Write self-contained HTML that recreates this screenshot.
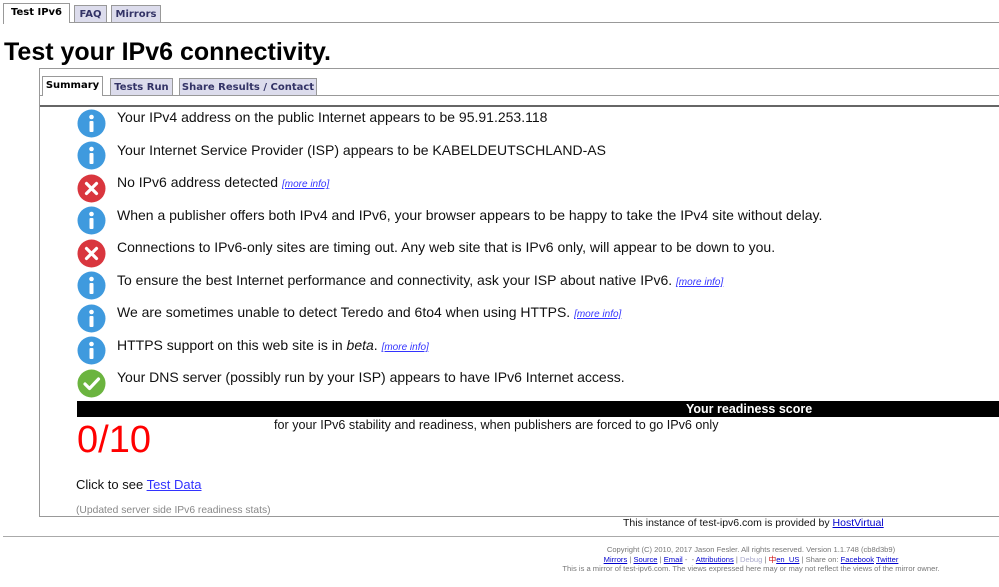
<!DOCTYPE html>
<html><head><meta charset="utf-8"><style>
body{margin:0;width:999px;height:587px;background:#fff;font-family:"Liberation Sans",Arial,sans-serif;position:relative;overflow:hidden;color:#000}
.a{position:absolute;white-space:nowrap}
.tab{position:absolute;font-family:"DejaVu Sans",sans-serif;font-weight:bold;font-size:10px;color:#333366;background:#dcdcec;border:1px solid #999;border-bottom:none;height:17px;line-height:17px;text-align:center;box-sizing:border-box}
.tab.on{background:#fff;color:#000;height:20px}
.hl{position:absolute;height:1px;background:#999}
.t{position:absolute;left:117px;font-size:14px;white-space:nowrap;color:#111}
.m{font-size:10px;font-style:italic;color:#33f;text-decoration:underline}
.ic{position:absolute;left:77px;width:29px;height:29px}
.ft a{color:#00c;text-decoration:underline}
</style></head><body>
<div class="tab on" style="left:3px;top:3px;width:67px">Test IPv6</div>
<div class="tab" style="left:74px;top:5px;width:33px">FAQ</div>
<div class="tab" style="left:111px;top:5px;width:50px">Mirrors</div>
<div class="hl" style="left:70px;top:22px;width:929px"></div>
<div class="hl" style="left:3px;top:22px;width:1px;height:2px"></div>

<div class="a" style="left:4px;top:38px;font-size:25px;font-weight:bold">Test your IPv6 connectivity.</div>

<div style="position:absolute;left:39px;top:68px;width:970px;height:449px;border:1px solid #999;box-sizing:border-box"></div>
<div class="tab on" style="left:42px;top:76px;width:61px">Summary</div>
<div class="tab" style="left:110px;top:78px;width:63px">Tests Run</div>
<div class="tab" style="left:179px;top:78px;width:138px">Share Results / Contact</div>
<div class="hl" style="left:103px;top:95px;width:896px"></div>
<div class="hl" style="left:40px;top:95px;width:3px"></div>
<div class="hl" style="left:40px;top:105px;width:959px;height:2px;background:#666"></div>

<svg width="0" height="0" style="position:absolute"><defs>
<g id="i"><circle cx="14.5" cy="14.5" r="14" fill="#3f9ade"/><circle cx="14.5" cy="8" r="2.3" fill="#fff"/><rect x="12.5" y="12" width="4" height="11" rx="1" fill="#fff"/></g>
<g id="x"><circle cx="14.5" cy="14.5" r="14" fill="#d9363e"/><path d="M9.5 9.5L19.5 19.5M19.5 9.5L9.5 19.5" stroke="#fff" stroke-width="3.2" stroke-linecap="round"/></g>
<g id="c"><circle cx="14.5" cy="14.5" r="14" fill="#6bb43f"/><path d="M8 15l4.5 4.5L21.5 10" stroke="#fff" stroke-width="3.2" fill="none" stroke-linecap="round" stroke-linejoin="round"/></g>
</defs></svg>

<svg class="ic" style="top:109px"><use href="#i"/></svg><div class="t" style="top:109px">Your IPv4 address on the public Internet appears to be 95.91.253.118</div>
<svg class="ic" style="top:141px"><use href="#i"/></svg><div class="t" style="top:142px">Your Internet Service Provider (ISP) appears to be KABELDEUTSCHLAND-AS</div>
<svg class="ic" style="top:174px"><use href="#x"/></svg><div class="t" style="top:174px">No IPv6 address detected <span class="m">[more info]</span></div>
<svg class="ic" style="top:206px"><use href="#i"/></svg><div class="t" style="top:207px">When a publisher offers both IPv4 and IPv6, your browser appears to be happy to take the IPv4 site without delay.</div>
<svg class="ic" style="top:239px"><use href="#x"/></svg><div class="t" style="top:239px">Connections to IPv6-only sites are timing out. Any web site that is IPv6 only, will appear to be down to you.</div>
<svg class="ic" style="top:271px"><use href="#i"/></svg><div class="t" style="top:272px">To ensure the best Internet performance and connectivity, ask your ISP about native IPv6. <span class="m">[more info]</span></div>
<svg class="ic" style="top:304px"><use href="#i"/></svg><div class="t" style="top:304px">We are sometimes unable to detect Teredo and 6to4 when using HTTPS. <span class="m">[more info]</span></div>
<svg class="ic" style="top:336px"><use href="#i"/></svg><div class="t" style="top:337px">HTTPS support on this web site is in <i>beta</i>. <span class="m">[more info]</span></div>
<svg class="ic" style="top:369px"><use href="#c"/></svg><div class="t" style="top:369px">Your DNS server (possibly run by your ISP) appears to have IPv6 Internet access.</div>

<div style="position:absolute;left:77px;top:401px;width:922px;height:16px;background:#000"></div>
<div class="a" style="left:686px;top:401px;color:#fff;font-weight:bold;font-size:12.5px;line-height:16px">Your readiness score</div>
<div class="a" style="left:77px;top:420px;color:#f00;font-size:38px;line-height:40px">0/10</div>
<div class="a" style="left:274px;top:418px;font-size:12.6px;color:#111">for your IPv6 stability and readiness, when publishers are forced to go IPv6 only</div>
<div class="a" style="left:76px;top:477px;font-size:13px;color:#111">Click to see <span style="color:#33f;text-decoration:underline">Test Data</span></div>
<div class="a" style="left:76px;top:505px;font-size:10.3px;color:#888">(Updated server side IPv6 readiness stats)</div>

<div class="a" style="left:623px;top:517px;font-size:10.5px;color:#111">This instance of test-ipv6.com is provided by <span style="color:#00c;text-decoration:underline">HostVirtual</span></div>
<div class="hl" style="left:3px;top:536px;width:996px;background:#aaa"></div>
<div class="ft" style="position:absolute;left:521px;width:460px;top:545px;text-align:center;font-size:7.6px;line-height:9.5px;color:#777">
Copyright (C) 2010, 2017 Jason Fesler. All rights reserved. Version 1.1.748 (cb8d3b9)<br>
<a>Mirrors</a> | <a>Source</a> | <a>Email</a> - &nbsp;- <a>Attributions</a> | <span style="color:#aac">Debug</span> | <span style="color:#c00">中</span><a>en_US</a> | Share on: <a>Facebook</a> <a>Twitter</a><br>
This is a mirror of test-ipv6.com. The views expressed here may or may not reflect the views of the mirror owner.
</div>
</body></html>
